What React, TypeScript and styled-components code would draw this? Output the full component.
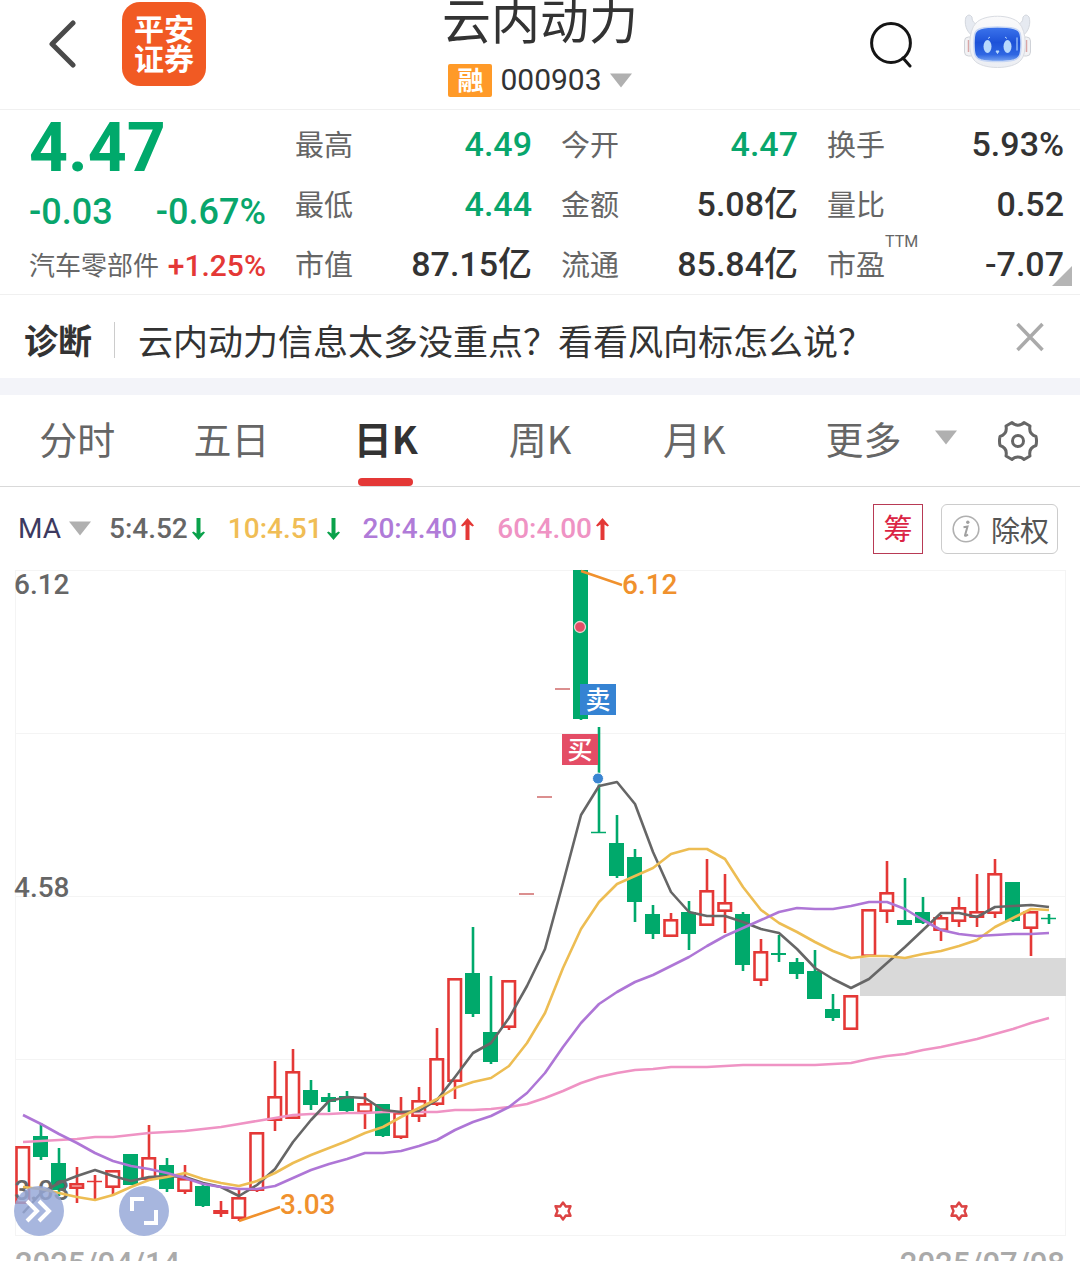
import React from "react";
import styled, { createGlobalStyle } from "styled-components";

const cjk = `"Noto Sans CJK SC", sans-serif`;
const num = `Roboto, "Noto Sans CJK SC", sans-serif`;

const color = {
  ink: "#333333",
  label: "#666666",
  green: "#08a66c",
  red: "#e43836",
  amber: "#f0912d",
  rule: "#f0f0f0",
};

const GlobalStyle = createGlobalStyle`
  *, *::before, *::after { box-sizing: border-box; }
  body { margin: 0; background: #fff; color: ${color.ink}; font-family: ${cjk}; }
  button { margin: 0; padding: 0; border: 0; background: none; color: inherit; font: inherit; cursor: pointer; }
  svg { display: block; }
  h1, h2, p, dl, dd { margin: 0; font-weight: 400; }
`;

const Screen = styled.main`
  height: 100vh;
  overflow: hidden;
`;

/* Header */

const Header = styled.header`
  display: grid;
  grid-template-columns: 1fr auto 1fr;
  height: 110px;
  padding: 0 49px;
  border-bottom: 1px solid ${color.rule};
`;

const HeaderSide = styled.div<{ $end?: boolean }>`
  display: flex;
  align-items: center;
  justify-content: ${(p) => (p.$end ? "flex-end" : "flex-start")};
  gap: ${(p) => (p.$end ? 52 : 46)}px;
  height: 88px;
`;

const AssistantButton = styled.button`
  padding-bottom: 4px;
`;

const BrandLogo = styled.div`
  display: flex;
  align-items: center;
  width: 84px;
  height: 84px;
  padding: 0 0 4px 12px;
  border-radius: 18px;
  background: #f15a23;
  color: #fff;
  font-size: 30px;
  font-weight: 700;
  line-height: 30px;
`;

const TitleBlock = styled.div`
  display: flex;
  flex-direction: column;
  align-items: center;
`;

const StockName = styled.h1`
  font-size: 49px;
  line-height: 36px;
`;

const CodeRow = styled.button`
  display: flex;
  align-items: center;
  gap: 8px;
  height: 88px;
  font-family: ${num};
  font-size: 30px;
  line-height: 36px;
`;

const MarginTag = styled.span`
  width: 44px;
  border-radius: 2px;
  background: #ff9a28;
  color: #fff;
  font-family: ${cjk};
  font-size: 26px;
  font-weight: 700;
  line-height: 30px;
  padding-bottom: 3px;
  text-align: center;
`;

/* Quote */

const Quote = styled.section`
  display: grid;
  grid-template-columns: repeat(4, 1fr);
  column-gap: 29px;
  position: relative;
  padding: 4px 16px 0 29px;
  border-bottom: 1px solid ${color.rule};
`;

const PriceColumn = styled.div`
  display: grid;
  grid-template-rows: 68px 60px 46px;
`;

const QuoteColumn = styled.dl`
  display: grid;
  grid-auto-rows: 60px;
`;

const QuoteRow = styled.div`
  display: flex;
  align-items: center;
  justify-content: space-between;
  white-space: nowrap;
`;

const Price = styled.div`
  color: #00a96b;
  font-family: ${num};
  font-size: 68px;
  font-weight: 700;
  line-height: 68px;
`;

const Change = styled.span`
  color: ${color.green};
  font-family: ${num};
  font-size: 36px;
  font-weight: 500;
`;

const Sector = styled.span`
  padding-bottom: 3px;
  color: ${color.label};
  font-size: 26px;
  line-height: 36px;
`;

const SectorChange = styled.span`
  color: ${color.red};
  font-family: ${num};
  font-size: 30px;
  font-weight: 500;
`;

const StatLabel = styled.dt`
  position: relative;
  padding-bottom: 3px;
  color: ${color.label};
  font-size: 29px;
  line-height: 40px;
`;

const StatNote = styled.sup`
  position: absolute;
  left: 100%;
  top: -9px;
  font-family: ${num};
  font-size: 16px;
  line-height: 16px;
`;

const StatValue = styled.dd<{ $down?: boolean }>`
  color: ${(p) => (p.$down ? color.green : color.ink)};
  font-family: ${num};
  font-size: 34px;
  font-weight: 500;
  line-height: 40px;
`;

const ExpandCorner = styled.button`
  position: absolute;
  right: 8px;
  bottom: 8px;
`;

/* Diagnosis strip */

const Diagnosis = styled.section`
  display: flex;
  align-items: center;
  height: 100px;
  padding: 6px 36px 0 24px;
  border-bottom: 17px solid #f3f4f9;
  white-space: nowrap;
`;

const DiagnosisTag = styled.strong`
  padding-right: 22px;
  font-size: 34px;
  line-height: 36px;
  border-right: 1px solid #cccccc;
`;

const DiagnosisText = styled.p`
  flex: 1;
  padding-left: 23px;
  font-size: 35px;
  line-height: 40px;
`;

const CloseButton = styled.button`
  padding-bottom: 6px;
`;

/* Period tabs */

const Tabs = styled.nav`
  display: grid;
  grid-template-columns: repeat(7, 1fr);
  height: 92px;
  border-bottom: 1px solid #d9d9d9;
`;

const Tab = styled.button<{ $active?: boolean }>`
  position: relative;
  padding-bottom: 6px;
  color: ${(p) => (p.$active ? color.ink : color.label)};
  font-size: 38px;
  font-weight: ${(p) => (p.$active ? 700 : 400)};

  &::after {
    content: "";
    display: ${(p) => (p.$active ? "block" : "none")};
    position: absolute;
    left: 50%;
    bottom: 0;
    width: 55px;
    height: 8px;
    margin-left: -28px;
    border-radius: 4px;
    background: ${color.red};
  }
`;

const TabTools = styled.div`
  display: flex;
  align-items: center;
  justify-content: space-between;
  grid-column: span 2;
  padding: 0 42px 0 54px;
`;

const MoreTab = styled(Tab)`
  display: flex;
  align-items: center;
  gap: 34px;
`;

/* Indicator row */

const Indicators = styled.div`
  display: flex;
  align-items: center;
  gap: 18px;
  height: 73px;
  padding: 10px 22px 0 18px;
  font-family: ${num};
  font-size: 28px;
  font-weight: 500;
  white-space: nowrap;
`;

const IndicatorSelect = styled.button`
  display: flex;
  align-items: center;
  gap: 8px;
  color: #3d3a60;
  font-weight: 400;
`;

const Averages = styled.div`
  display: flex;
  gap: 23px;
`;

const Average = styled.span<{ $color: string }>`
  display: flex;
  align-items: center;
  gap: 4px;
  color: ${(p) => p.$color};
`;

const ChipButton = styled.button`
  width: 50px;
  height: 50px;
  margin-left: auto;
  padding-bottom: 4px;
  border: 1px solid #b83a55;
  color: #db2444;
  font-family: ${cjk};
  font-size: 29px;
  font-weight: 400;
`;

const RightsButton = styled.button`
  display: flex;
  align-items: center;
  gap: 11px;
  height: 50px;
  padding: 0 8px 0 10px;
  border: 1px solid #cccccc;
  border-radius: 6px;
  color: #555555;
  font-family: ${cjk};
  font-size: 29px;
  font-weight: 400;
  line-height: 44px;
`;

/* Chart */

const ChartArea = styled.section`
  position: relative;
`;

const ChartSvg = styled.svg`
  width: 100%;
  height: auto;
  font-family: ${num};
  font-size: 28px;
  font-weight: 500;
`;

const ChartControls = styled.div`
  display: flex;
  gap: 55px;
  position: absolute;
  left: 14px;
  bottom: 4px;
`;

const RoundButton = styled.button`
  display: grid;
  place-items: center;
  width: 50px;
  height: 50px;
  border-radius: 50%;
  background: rgba(150, 168, 216, 0.84);
`;

const DateAxis = styled.div`
  display: flex;
  justify-content: space-between;
  padding: 4px 15px 0;
  color: #aaaaaa;
  font-family: ${num};
  font-size: 31px;
  font-weight: 500;
  line-height: 40px;
`;

const Caret = () => (
  <svg width="22" height="15" viewBox="0 0 22 15" aria-hidden="true">
    <path d="M0 0.5H22L11 14.5Z" fill="#b0b0b0" />
  </svg>
);

const TrendArrow = ({ up }: { up?: boolean }) => (
  <svg width="13" height="22" viewBox="0 0 13 22" aria-hidden="true">
    <g transform={up ? undefined : "rotate(180 6.5 11)"} fill={up ? color.red : "#0aa24b"}>
      <path d="M6.5 0L13 7.5L11.5 8.5L8.5 6.5V22H4.5V6.5L1.5 8.5L0 7.5Z" />
    </g>
  </svg>
);

const BackIcon = () => (
  <svg width="27" height="48" viewBox="0 0 27 48" aria-hidden="true">
    <path d="M24 3L3 24L24 45" fill="none" stroke="#4a4a4a" strokeWidth="5" strokeLinecap="round" strokeLinejoin="round" />
  </svg>
);

const SearchIcon = () => (
  <svg width="42" height="48" viewBox="0 -2 42 48" fill="none" stroke="#151515" strokeWidth="3" aria-hidden="true">
    <circle cx="21" cy="21" r="19.4" />
    <path d="M33 36L40 44" strokeLinecap="round" />
  </svg>
);

const RobotIcon = () => (
  <svg width="67" height="56" viewBox="0 0 67 56" aria-hidden="true">
    <defs>
      <linearGradient id="face" x1="0" y1="0" x2="0" y2="1">
        <stop offset="0" stopColor="#3c74ec" />
        <stop offset="0.45" stopColor="#1d52d8" />
        <stop offset="0.8" stopColor="#2f67e2" />
        <stop offset="1" stopColor="#7aa6f2" />
      </linearGradient>
      <linearGradient id="shell" x1="0" y1="0" x2="0" y2="1">
        <stop offset="0" stopColor="#fafafb" />
        <stop offset="1" stopColor="#eceef3" />
      </linearGradient>
    </defs>
    <path d="M9 22C2 18 0 9 2 3Q5-1 8 3C8 9 12 11 17 9V18ZM58 22C65 18 67 9 65 3Q62-1 59 3C59 9 55 11 50 9V18Z" fill="#e6eaf1" stroke="#d3d7de" />
    <rect x="0.5" y="23" width="10" height="19" rx="4" fill="#f2f2f4" stroke="#cfd2d8" />
    <rect x="56.5" y="23" width="10" height="19" rx="4" fill="#f2f2f4" stroke="#cfd2d8" />
    <path d="M4.500 26V38M62.500 26V38" stroke="#d9a6a6" strokeWidth="1.500" />
    <path d="M12 9C20 0 47 0 55 9C63 17 63 40 57 46C49 56 18 56 10 46C4 40 4 17 12 9Z" fill="url(#shell)" stroke="#d9dce2" />
    <path d="M17 14.500C25 12.500 42 12.500 50 14.500C56 16 57 19 57 29.500C57 41 56 44 50 46C42 48 25 48 17 46C11 44 10 41 10 29.500C10 19 11 16 17 14.500Z" fill="url(#face)" stroke="#c6d6f5" strokeWidth="1.500" />
    <ellipse cx="23.500" cy="32.500" rx="4" ry="6.500" fill="#b9dafc" />
    <ellipse cx="43.500" cy="32.500" rx="4" ry="6.500" fill="#b9dafc" />
    <path d="M24 24.500L26 23M43 24.500L41 23M32 37H35L33.500 39.500Z" stroke="#b9dafc" fill="#b9dafc" />
    <path d="M53 24V36" stroke="#8db4f6" strokeWidth="1.500" strokeLinecap="round" />
  </svg>
);

const CloseIcon = () => (
  <svg width="28" height="30" viewBox="0 0 28 30" aria-hidden="true">
    <path d="M1.500 2L26.500 28M26.500 2L1.500 28" stroke="#aaaaaa" strokeWidth="3.500" />
  </svg>
);

const GearIcon = () => (
  <svg width="40" height="42" viewBox="0 0 40 42" fill="none" stroke="#666666" strokeWidth="3" strokeLinejoin="round" aria-hidden="true">
    <path d="M14 2.500C17 6 23 6 26 2.500L32 6C31 11 33 15 38 16.500Q39 21 38 25.500C33 27 31 31 32 36L26 39.500C23 36 17 36 14 39.500L8 36C9 31 7 27 2 25.500Q1 21 2 16.500C7 15 9 11 8 6Z" />
    <circle cx="20" cy="21" r="5.500" />
  </svg>
);

const InfoIcon = () => (
  <svg width="28" height="28" viewBox="0 0 28 28" aria-hidden="true">
    <circle cx="14" cy="14" r="12.800" fill="none" stroke="#b0b0b0" strokeWidth="1.600" />
    <circle cx="15.800" cy="7.200" r="1.700" fill="#a0a0a0" />
    <path d="M11.500 12.200L15.500 11.500L13 20.500Q13 21.500 16 19.500" fill="none" stroke="#a0a0a0" strokeWidth="2" />
  </svg>
);

type Stat = { label: string; value: string; down?: boolean; note?: string };

const stats: Stat[][] = [
  [
    { label: "最高", value: "4.49", down: true },
    { label: "最低", value: "4.44", down: true },
    { label: "市值", value: "87.15亿" },
  ],
  [
    { label: "今开", value: "4.47", down: true },
    { label: "金额", value: "5.08亿" },
    { label: "流通", value: "85.84亿" },
  ],
  [
    { label: "换手", value: "5.93%" },
    { label: "量比", value: "0.52" },
    { label: "市盈", value: "-7.07", note: "TTM" },
  ],
];

const tabs = ["分时", "五日", "日K", "周K", "月K"];

const averages = [
  { text: "5:4.52", color: "#666666", up: false },
  { text: "10:4.51", color: "#f0bd55", up: false },
  { text: "20:4.40", color: "#b07bd8", up: true },
  { text: "60:4.00", color: "#ef93c4", up: true },
];

/* Each candle: kind, wick top, body top, body bottom, wick bottom.
   r = hollow rise, g = solid fall, d = limit-up dash */
type Candle = ["r" | "g" | "d", number, number, number, number];

const candles: Candle[] = [
  ["r", 1146, 1146, 1204, 1204], ["g", 1123, 1136, 1157, 1160], ["g", 1148, 1163, 1190, 1196],
  ["r", 1167, 1183, 1189, 1203], ["r", 1175, 1181, 1182, 1199], ["r", 1170, 1170, 1188, 1195],
  ["g", 1154, 1154, 1185, 1185], ["r", 1125, 1157, 1180, 1180], ["g", 1158, 1165, 1189, 1192],
  ["r", 1165, 1178, 1192, 1194], ["g", 1184, 1186, 1206, 1207], ["r", 1201, 1210, 1214, 1217],
  ["r", 1190, 1197, 1219, 1221], ["r", 1132, 1132, 1191, 1192], ["r", 1061, 1096, 1121, 1131],
  ["r", 1049, 1071, 1119, 1119], ["g", 1080, 1090, 1105, 1110], ["g", 1093, 1097, 1102, 1112],
  ["g", 1091, 1096, 1111, 1113], ["r", 1093, 1103, 1113, 1129], ["g", 1104, 1104, 1136, 1137],
  ["r", 1097, 1112, 1138, 1139], ["r", 1087, 1100, 1117, 1122], ["r", 1028, 1058, 1105, 1106],
  ["r", 978, 978, 1082, 1099], ["g", 927, 973, 1014, 1017], ["g", 976, 1032, 1062, 1064],
  ["r", 980, 980, 1028, 1030], ["d", 894, 894, 894, 894], ["d", 797, 797, 797, 797],
  ["d", 689, 689, 689, 689], ["g", 570, 570, 719, 720], ["g", 727, 832, 833, 833],
  ["g", 815, 843, 876, 878], ["g", 849, 857, 902, 922], ["g", 905, 914, 934, 939],
  ["r", 913, 919, 937, 937], ["g", 901, 912, 934, 950], ["r", 859, 890, 926, 926],
  ["r", 874, 902, 912, 933], ["g", 912, 914, 965, 971], ["r", 939, 951, 981, 986],
  ["g", 935, 953, 955, 962], ["g", 958, 962, 974, 979], ["g", 950, 971, 999, 999],
  ["g", 994, 1009, 1018, 1021], ["r", 995, 995, 1030, 1030], ["r", 909, 909, 957, 957],
  ["r", 861, 892, 912, 923], ["g", 878, 920, 925, 925], ["g", 897, 912, 923, 924],
  ["r", 915, 917, 931, 941], ["r", 897, 907, 922, 927], ["r", 874, 911, 918, 927],
  ["r", 859, 873, 914, 918], ["g", 882, 882, 921, 922], ["r", 911, 911, 929, 956],
  ["g", 914, 918, 919, 924],
];

const lines = [
  {
    color: "#ef93c4",
    values: [1142, 1141, 1140, 1139, 1137, 1137, 1135, 1133, 1132, 1131, 1129, 1127, 1124, 1121, 1118, 1115, 1114, 1114, 1113, 1113, 1112, 1112, 1112, 1112, 1110, 1110, 1109, 1107, 1104, 1098, 1091, 1083, 1077, 1073, 1070, 1069, 1067, 1067, 1067, 1066, 1065, 1065, 1065, 1065, 1065, 1064, 1063, 1059, 1056, 1054, 1050, 1047, 1043, 1039, 1034, 1029, 1023, 1018],
  },
  {
    color: "#666666",
    values: [1213, 1193, 1183, 1176, 1170, 1176, 1181, 1177, 1176, 1177, 1183, 1187, 1196, 1185, 1169, 1142, 1120, 1101, 1097, 1098, 1110, 1112, 1111, 1100, 1077, 1053, 1043, 1018, 986, 949, 883, 815, 786, 782, 804, 852, 892, 912, 916, 916, 922, 929, 933, 949, 968, 979, 988, 979, 963, 947, 930, 913, 913, 917, 907, 906, 905, 907],
  },
  {
    color: "#edbd53",
    values: [1187, 1189, 1193, 1197, 1200, 1195, 1187, 1180, 1177, 1173, 1179, 1183, 1186, 1181, 1173, 1163, 1155, 1148, 1141, 1133, 1127, 1117, 1108, 1099, 1088, 1082, 1078, 1066, 1043, 1013, 968, 929, 902, 884, 876, 868, 854, 849, 849, 859, 887, 910, 923, 932, 942, 951, 958, 956, 956, 958, 954, 951, 946, 940, 927, 918, 909, 910],
  },
  {
    color: "#ae76d6",
    values: [1115, 1124, 1134, 1143, 1153, 1161, 1166, 1169, 1173, 1178, 1184, 1187, 1189, 1189, 1186, 1178, 1170, 1164, 1159, 1153, 1153, 1151, 1146, 1140, 1130, 1122, 1116, 1107, 1093, 1073, 1047, 1023, 1004, 992, 982, 975, 966, 957, 946, 936, 928, 920, 912, 908, 909, 909, 906, 902, 902, 909, 920, 930, 934, 936, 935, 934, 934, 933],
  },
];

const xAt = (i: number) => 23 + i * 18;

const CandleMark = ({ x, candle }: { x: number; candle: Candle }) => {
  const [kind, high, top, bottom, low] = candle;
  if (kind === "d") return <path d={`M${x - 8} ${top}H${x + 7}`} stroke="#cf6a6a" strokeWidth="1.500" />;
  const stroke = kind === "r" ? color.red : "#00a96b";
  const thin = bottom - top < 2;
  return (
    <g stroke={stroke} strokeWidth="2.600">
      {high < top && <path d={`M${x} ${high}V${top + 1}`} />}
      {low > bottom && <path d={`M${x} ${bottom - 1}V${low}`} />}
      {thin && <path d={`M${x - 8} ${top + 0.5}H${x + 7}`} strokeWidth="1.500" />}
      {!thin && kind === "g" && <rect x={x - 8} y={top} width="15" height={bottom - top} fill={stroke} stroke="none" />}
      {!thin && kind === "r" && (
        <rect x={x - 6.5} y={top + 1.3} width="12.500" height={Math.max(bottom - top - 2.6, 1)} fill="#fff" />
      )}
    </g>
  );
};

const TradeFlag = ({ x, y, fill, text }: { x: number; y: number; fill: string; text: string }) => (
  <g>
    <rect x={x} y={y} width="36" height="31" fill={fill} />
    <text x={x + 18} y={y + 25} textAnchor="middle" fill="#fff" fontSize="25">
      {text}
    </text>
  </g>
);

const Star = ({ x }: { x: number }) => (
  <path
    transform={`translate(${x} 1211)`}
    d="M0 -8.500L2.800 -4.500L7.500 -4.800L5.500 0L7.500 4.800L2.800 4.500L0 8.500L-2.800 4.500L-7.500 4.800L-5.500 0L-7.500 -4.800L-2.800 -4.500Z"
    fill="#fff"
    stroke="#dc4444"
    strokeWidth="2.400"
    strokeLinejoin="round"
  />
);

const KLineChart = () => (
  <ChartSvg viewBox="0 560 1080 680" role="img" aria-label="日K">
    <path d="M15 570.500H1065M15 733.500H1065M15 896.500H1065M15 1059.500H1065M15 1235.500H1065M15.500 570V1236M1065.500 570V1236" stroke="#f4f4f4" strokeWidth="1" />
    <rect x="860" y="958" width="206" height="38" fill="#d9d9d9" />
    {candles.map((c, i) => (
      <CandleMark key={i} x={xAt(i)} candle={c} />
    ))}
    <g fill="#666666">
      <text x="14" y="594">6.12</text>
      <text x="14" y="897">4.58</text>
      <text x="14" y="1200">3.03</text>
    </g>
    {lines.map((line) => (
      <polyline
        key={line.color}
        points={line.values.map((y, i) => `${xAt(i)},${y}`).join(" ")}
        fill="none"
        stroke={line.color}
        strokeWidth="2.600"
        strokeLinejoin="round"
      />
    ))}
    <path d="M581 571L622 585M239 1221L280 1207" stroke={color.amber} strokeWidth="2.500" />
    <g fill={color.amber}>
      <text x="622" y="594">6.12</text>
      <text x="280" y="1214">3.03</text>
    </g>
    <circle cx="580" cy="627" r="5.500" fill="#e44d66" stroke="#e6d5d2" strokeWidth="1.300" />
    <circle cx="598" cy="778.500" r="5.500" fill="#3a85d2" stroke="#fff" />
    <TradeFlag x={580} y={684} fill="#3583d3" text="卖" />
    <TradeFlag x={562} y={734} fill="#e44d66" text="买" />
    <Star x={563} />
    <Star x={959} />
  </ChartSvg>
);

export default function App() {
  return (
    <Screen>
      <GlobalStyle />
      <Header>
        <HeaderSide>
          <button aria-label="返回"><BackIcon /></button>
          <BrandLogo>平安<br />证券</BrandLogo>
        </HeaderSide>
        <TitleBlock>
          <StockName>云内动力</StockName>
          <CodeRow>
            <MarginTag>融</MarginTag>
            000903
            <Caret />
          </CodeRow>
        </TitleBlock>
        <HeaderSide $end>
          <button aria-label="搜索"><SearchIcon /></button>
          <AssistantButton aria-label="助手"><RobotIcon /></AssistantButton>
        </HeaderSide>
      </Header>

      <Quote>
        <PriceColumn>
          <Price>4.47</Price>
          <QuoteRow>
            <Change>-0.03</Change>
            <Change>-0.67%</Change>
          </QuoteRow>
          <QuoteRow>
            <Sector>汽车零部件</Sector>
            <SectorChange>+1.25%</SectorChange>
          </QuoteRow>
        </PriceColumn>
        {stats.map((column, i) => (
          <QuoteColumn key={i}>
            {column.map((s) => (
              <QuoteRow key={s.label}>
                <StatLabel>
                  {s.label}
                  {s.note && <StatNote>{s.note}</StatNote>}
                </StatLabel>
                <StatValue $down={s.down}>{s.value}</StatValue>
              </QuoteRow>
            ))}
          </QuoteColumn>
        ))}
        <ExpandCorner aria-label="展开">
          <svg width="20" height="20" viewBox="0 0 20 20" aria-hidden="true">
            <path d="M20 0V20H0Z" fill="#b5b5b5" />
          </svg>
        </ExpandCorner>
      </Quote>

      <Diagnosis>
        <DiagnosisTag>诊断</DiagnosisTag>
        <DiagnosisText>云内动力信息太多没重点？看看风向标怎么说？</DiagnosisText>
        <CloseButton aria-label="关闭"><CloseIcon /></CloseButton>
      </Diagnosis>

      <Tabs>
        {tabs.map((t) => (
          <Tab key={t} $active={t === "日K"}>{t}</Tab>
        ))}
        <TabTools>
          <MoreTab>更多<Caret /></MoreTab>
          <button aria-label="设置"><GearIcon /></button>
        </TabTools>
      </Tabs>

      <Indicators>
        <IndicatorSelect>MA<Caret /></IndicatorSelect>
        <Averages>
          {averages.map((a) => (
            <Average key={a.text} $color={a.color}>
              {a.text}
              <TrendArrow up={a.up} />
            </Average>
          ))}
        </Averages>
        <ChipButton>筹</ChipButton>
        <RightsButton><InfoIcon />除权</RightsButton>
      </Indicators>

      <ChartArea>
        <KLineChart />
        <ChartControls>
          <RoundButton aria-label="快进">
            <svg width="28" height="24" viewBox="0 0 28 24" fill="none" stroke="#fff" strokeWidth="4" aria-hidden="true">
              <path d="M2 2L12 12L2 22M14 2L24 12L14 22" />
            </svg>
          </RoundButton>
          <RoundButton aria-label="全屏">
            <svg width="28" height="28" viewBox="0 0 28 28" fill="none" stroke="#fff" strokeWidth="4" aria-hidden="true">
              <path d="M2 14V2H14M14 26H26V13" />
            </svg>
          </RoundButton>
        </ChartControls>
      </ChartArea>
      <DateAxis>
        <time>2025/04/14</time>
        <time>2025/07/08</time>
      </DateAxis>
    </Screen>
  );
}
